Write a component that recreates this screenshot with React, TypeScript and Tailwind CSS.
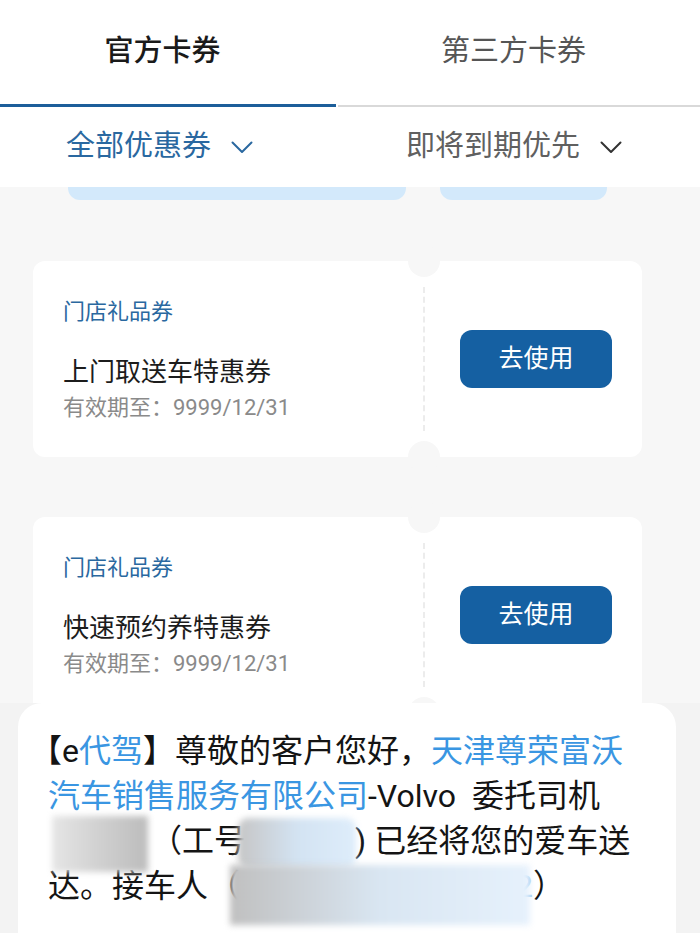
import React from "react";

const FONT = { fontFamily: 'Roboto, "Noto Sans CJK SC", "Noto Sans", sans-serif' };

function Chevron({ color }: { color: string }) {
  return (
    <svg width="22" height="13" viewBox="0 0 22 13" fill="none">
      <polyline points="1.5,1.5 11,11 20.5,1.5" stroke={color} strokeWidth="2" strokeLinecap="round" strokeLinejoin="round" />
    </svg>
  );
}

function Coupon({ title }: { title: string }) {
  return (
    <div className="flex h-[196px] w-[609px] shrink-0 rounded-[12px] bg-white">
      <div className="flex w-[391px] flex-col pl-[30px] pt-[38px]">
        <div className="text-[22px] leading-[26px] text-[#2a68a0]">门店礼品券</div>
        <div className="mt-[31px] text-[26px] leading-[32px] text-[#1c1c1c]">{title}</div>
        <div className="mt-[6px] text-[22px] leading-[28px] text-[#8a8a8a]">有效期至：9999/12/31</div>
      </div>
      <div className="relative w-0">
        <div className="absolute left-[-16px] top-[-16px] h-[32px] w-[32px] rounded-full bg-[#f7f7f7]" />
        <div className="absolute bottom-[-16px] left-[-16px] h-[32px] w-[32px] rounded-full bg-[#f7f7f7]" />
        <div className="absolute bottom-[26px] left-[-1px] top-[26px] border-l-2 border-dashed border-[#ececec]" />
      </div>
      <div className="flex flex-1 items-center justify-center pl-[6px]">
        <div className="flex h-[58px] w-[152px] items-center justify-center rounded-[12px] bg-[#1560a2] text-[25px] text-white">
          去使用
        </div>
      </div>
    </div>
  );
}

function Blur({ w, cls }: { w: string; cls: string }) {
  return (
    <span className={`relative inline-block h-[32px] align-middle ${w}`}>
      <span className={`absolute blur-[3px] ${cls}`} />
    </span>
  );
}

export default function App() {
  return (
    <div className="flex h-[933px] w-[700px] flex-col overflow-hidden bg-[#f7f7f7]" style={FONT}>
      {/* Tabs */}
      <div className="bg-white">
        <div className="flex h-[104px]">
          <div className="flex w-[337px] items-center justify-center pr-[12px] text-[29px] font-medium text-[#1a1a1a]">官方卡券</div>
          <div className="flex flex-1 items-center justify-center pr-[10px] text-[29px] text-[#555555]">第三方卡券</div>
        </div>
        <div className="flex h-[3px] items-end">
          <div className="h-[3px] w-[336px] bg-[#1c5e9a]" />
          <div className="ml-[2px] h-[2px] flex-1 bg-[#d9d9d9]" />
        </div>
        {/* Filters */}
        <div className="flex h-[80px] items-center justify-between pl-[66px] pr-[78px]">
          <div className="flex items-center gap-[20px] text-[29px] text-[#2a68a0]">
            <span>全部优惠券</span>
            <Chevron color="#2a68a0" />
          </div>
          <div className="flex items-center gap-[20px] text-[29px] text-[#606060]">
            <span className="-ml-[5px]">即将到期优先</span>
            <Chevron color="#333333" />
          </div>
        </div>
      </div>

      {/* List */}
      <div className="flex h-[516px] flex-col overflow-hidden">
        <div className="flex h-[14px]">
          <div className="ml-[68px] h-[13px] w-[338px] rounded-b-[12px] bg-[#d3e9fb]" />
          <div className="ml-[34px] h-[13px] w-[167px] rounded-b-[12px] bg-[#d3e9fb]" />
        </div>
        <div className="flex flex-col gap-[60px] pl-[33px] pt-[61px]">
          <Coupon title="上门取送车特惠券" />
          <Coupon title="快速预约养特惠券" />
        </div>
      </div>

      {/* Message */}
      <div className="flex flex-1 bg-[#f3f3f3] pl-[18px] pr-[24px]">
        <div className="flex-1 rounded-t-[24px] bg-white pl-[30px] pt-[26px] text-[32px] leading-[45px] text-[#141414]">
          <div className="-ml-[18px] whitespace-nowrap">
            【e<span className="text-[#3a96e2]">代驾</span>】尊敬的客户您好，<span className="text-[#3a96e2]">天津尊荣富沃</span>
          </div>
          <div className="whitespace-nowrap">
            <span className="text-[#3a96e2]">汽车销售服务有限公司</span>-Volvo{"\u00a0\u00a0"}委托司机
          </div>
          <div className="whitespace-nowrap">
            <Blur w="w-[102px]" cls="-top-[12px] left-[4px] h-[56px] w-[96px] bg-gradient-to-r from-[#e6e6e6] via-[#d0d0d0] to-[#bcbcbc]" />
            （工号
            <Blur w="w-[109px]" cls="-top-[10px] -left-[8px] h-[50px] w-[118px] rounded-[10px] bg-gradient-to-r from-[#c6c6c6] via-[#d3e3f2] to-[#deedfb]" />
            <span className="mr-[8px]">)</span>已经将您的爱车送
          </div>
          <div className="whitespace-nowrap">
            达。接车人（
            <Blur w="w-[275px]" cls="-top-[8px] -left-[10px] h-[60px] w-[300px] bg-gradient-to-r from-[#c0c0c0] via-[#d9e6f2] to-[#e6f1fc]" />
            <span className="text-[#9cc8ee]">2</span>）
          </div>
        </div>
      </div>
    </div>
  );
}
